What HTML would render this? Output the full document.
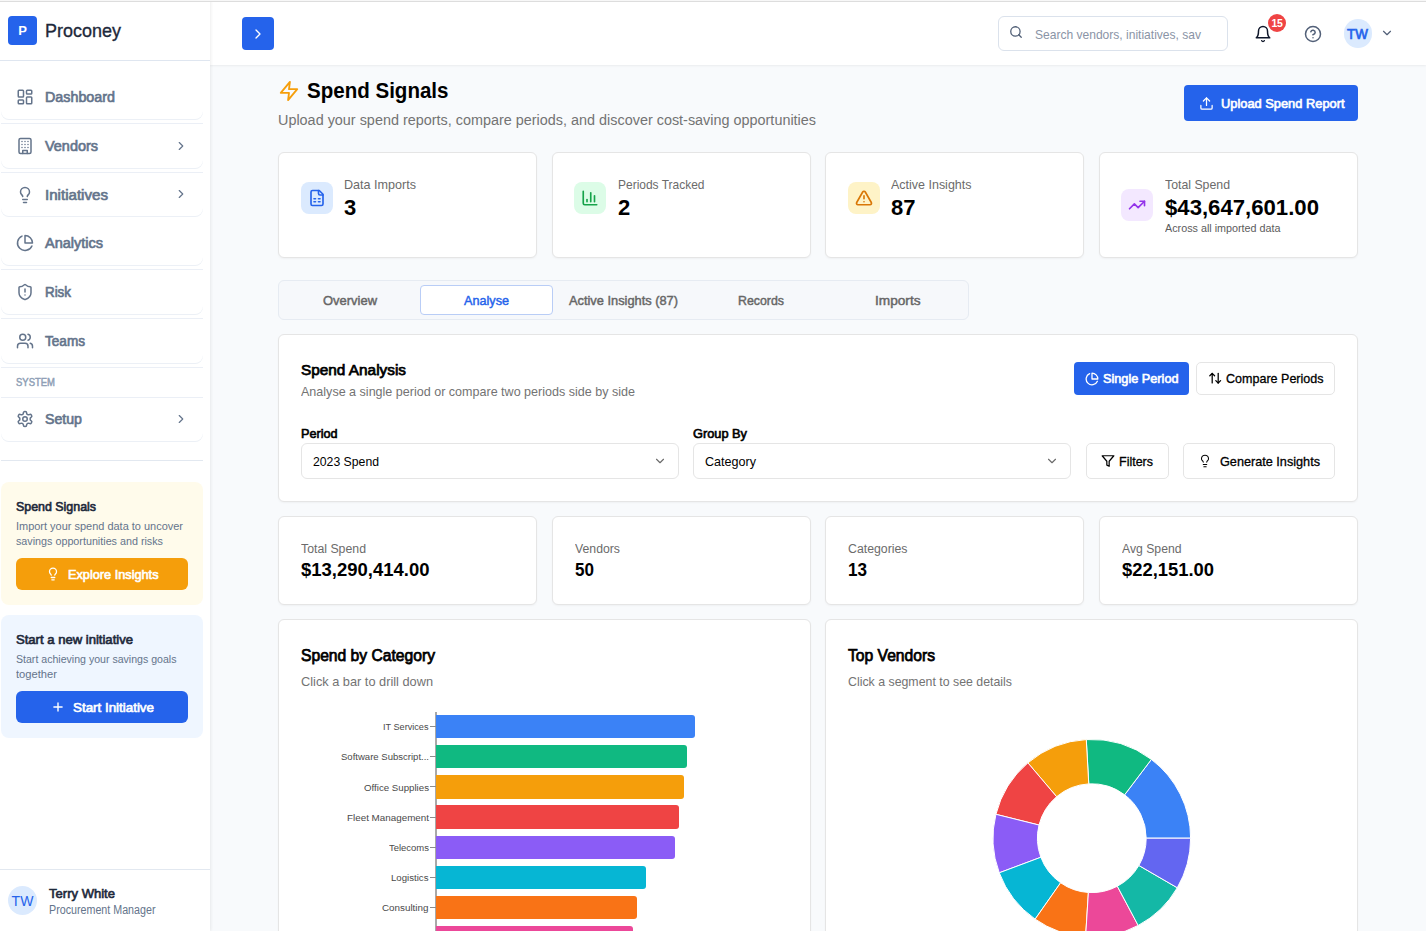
<!DOCTYPE html>
<html><head><meta charset="utf-8"><title>Proconey - Spend Signals</title>
<style>
*{box-sizing:border-box;margin:0;padding:0}
html,body{width:1426px;height:931px;overflow:hidden;background:#f8fafc;font-family:"Liberation Sans", sans-serif;}
.b{position:absolute}
.i{position:absolute;display:block}
.t{position:absolute;white-space:nowrap;font-family:"Liberation Sans", sans-serif;}
</style></head>
<body>
<header>
<div class="b" style="left:210px;top:0px;width:1216px;height:65px;background:#fff;box-shadow:0 1px 2px rgba(0,0,0,0.06);"></div>
<div class="b" style="left:242px;top:17px;width:32px;height:33px;background:#2563eb;border-radius:4px;"></div>
<svg class="i" style="left:250px;top:25.5px;" width="16" height="16" viewBox="0 0 24 24" fill="none" stroke="#fff" stroke-width="2" stroke-linecap="round" stroke-linejoin="round"><path d="m9 18 6-6-6-6"/></svg>
<div class="b" style="left:998px;top:16px;width:230px;height:35px;background:#fff;border:1px solid #dbe2ec;border-radius:6px;"></div>
<svg class="i" style="left:1009px;top:25.3px;" width="14" height="14" viewBox="0 0 24 24" fill="none" stroke="#4f5e75" stroke-width="2.2" stroke-linecap="round" stroke-linejoin="round"><circle cx="11" cy="11" r="8"/><path d="m21 21-4.300-4.300"/></svg>
<div class="t" style="top:24.50px;font-size:13px;line-height:19px;color:#8a94a6;transform:scaleX(0.9263);transform-origin:0 50%;left:1035px;">Search vendors, initiatives, sav</div>
<svg class="i" style="left:1254px;top:24.5px;" width="18" height="18" viewBox="0 0 24 24" fill="none" stroke="#0f172a" stroke-width="2" stroke-linecap="round" stroke-linejoin="round"><path d="M6 8a6 6 0 0 1 12 0c0 7 3 9 3 9H3s3-2 3-9"/><path d="M10.300 21a1.940 1.940 0 0 0 3.400 0"/></svg>
<div class="b" style="left:1268px;top:14px;width:18px;height:18px;background:#ef4444;border-radius:9px;"></div>
<div class="t" style="top:15.20px;font-size:10.5px;line-height:16px;color:#fff;font-weight:700;left:1277px;transform:translateX(-50%);letter-spacing:-0.3px;">15</div>
<svg class="i" style="left:1304px;top:25px;" width="18" height="18" viewBox="0 0 24 24" fill="none" stroke="#526078" stroke-width="2" stroke-linecap="round" stroke-linejoin="round"><circle cx="12" cy="12" r="10"/><path d="M9.090 9a3 3 0 0 1 5.830 1c0 2-3 3-3 3"/><path d="M12 17h.01"/></svg>
<div class="b" style="left:1343.5px;top:19px;width:28.5px;height:28.5px;background:#dbeafe;border-radius:15px;"></div>
<div class="t" style="top:23.70px;font-size:14px;line-height:20px;color:#2563eb;transform:scaleX(0.9556);transform-origin:0 50%;-webkit-text-stroke:0.7px #2563eb;left:1347.3px;">TW</div>
<svg class="i" style="left:1380.4px;top:26.3px;" width="14" height="14" viewBox="0 0 24 24" fill="none" stroke="#526078" stroke-width="2" stroke-linecap="round" stroke-linejoin="round"><path d="m6 9 6 6 6-6"/></svg>
</header>
<aside>
<div class="b" style="left:0px;top:0px;width:210px;height:931px;background:#fff;box-shadow:1px 0 3px rgba(0,0,0,0.07);"></div>
<div class="b" style="left:0px;top:60px;width:210px;height:1px;background:#dfe6f0;"></div>
<div class="b" style="left:8px;top:16px;width:29px;height:29px;background:#2563eb;border-radius:4px;"></div>
<div class="t" style="top:20.80px;font-size:13px;line-height:19px;color:#fff;font-weight:700;left:22.5px;transform:translateX(-50%);">P</div>
<div class="t" style="top:16.90px;font-size:19px;line-height:27px;color:#1e293b;transform:scaleX(0.9467);transform-origin:0 50%;-webkit-text-stroke:0.35px #1e293b;left:45px;">Proconey</div>
<div class="b" style="left:1px;top:75px;width:202px;height:43.5px;background:#fff;border-radius:0 0 8px 8px;box-shadow:0 1px 0 #ecf0f6;"></div>
<div class="b" style="left:1px;top:123px;width:202px;height:1px;background:#ebeff6;"></div>
<svg class="i" style="left:16px;top:88px;" width="18" height="18" viewBox="0 0 24 24" fill="none" stroke="#64748b" stroke-width="2" stroke-linecap="round" stroke-linejoin="round"><rect width="7" height="9" x="3" y="3" rx="1"/><rect width="7" height="5" x="14" y="3" rx="1"/><rect width="7" height="9" x="14" y="12" rx="1"/><rect width="7" height="5" x="3" y="16" rx="1"/></svg>
<div class="t" style="top:87.00px;font-size:14px;line-height:20px;color:#64748b;transform:scaleX(1.0219);transform-origin:0 50%;-webkit-text-stroke:0.65px #64748b;left:44.5px;">Dashboard</div>
<div class="b" style="left:1px;top:124px;width:202px;height:43.5px;background:#fff;border-radius:0 0 8px 8px;box-shadow:0 1px 0 #ecf0f6;"></div>
<div class="b" style="left:1px;top:172px;width:202px;height:1px;background:#ebeff6;"></div>
<svg class="i" style="left:16px;top:137px;" width="18" height="18" viewBox="0 0 24 24" fill="none" stroke="#64748b" stroke-width="2" stroke-linecap="round" stroke-linejoin="round"><rect width="16" height="20" x="4" y="2" rx="2" ry="2"/><path d="M9 22v-4h6v4"/><path d="M8 6h.01"/><path d="M16 6h.01"/><path d="M12 6h.01"/><path d="M12 10h.01"/><path d="M12 14h.01"/><path d="M16 10h.01"/><path d="M16 14h.01"/><path d="M8 10h.01"/><path d="M8 14h.01"/></svg>
<div class="t" style="top:136.00px;font-size:14px;line-height:20px;color:#64748b;transform:scaleX(1.0316);transform-origin:0 50%;-webkit-text-stroke:0.65px #64748b;left:44.5px;">Vendors</div>
<svg class="i" style="left:174px;top:138.5px;" width="14" height="14" viewBox="0 0 24 24" fill="none" stroke="#64748b" stroke-width="2" stroke-linecap="round" stroke-linejoin="round"><path d="m9 18 6-6-6-6"/></svg>
<div class="b" style="left:1px;top:172.5px;width:202px;height:43.5px;background:#fff;border-radius:0 0 8px 8px;box-shadow:0 1px 0 #ecf0f6;"></div>
<div class="b" style="left:1px;top:220.5px;width:202px;height:1px;background:#ebeff6;"></div>
<svg class="i" style="left:16px;top:185.5px;" width="18" height="18" viewBox="0 0 24 24" fill="none" stroke="#64748b" stroke-width="2" stroke-linecap="round" stroke-linejoin="round"><path d="M15 14c.2-1 .7-1.7 1.5-2.5 1-.9 1.5-2.2 1.5-3.5A6 6 0 0 0 6 8c0 1 .2 2.2 1.5 3.5.7.7 1.3 1.5 1.5 2.5"/><path d="M9 18h6"/><path d="M10 22h4"/></svg>
<div class="t" style="top:184.50px;font-size:14px;line-height:20px;color:#64748b;transform:scaleX(1.0795);transform-origin:0 50%;-webkit-text-stroke:0.65px #64748b;left:44.5px;">Initiatives</div>
<svg class="i" style="left:174px;top:187.0px;" width="14" height="14" viewBox="0 0 24 24" fill="none" stroke="#64748b" stroke-width="2" stroke-linecap="round" stroke-linejoin="round"><path d="m9 18 6-6-6-6"/></svg>
<div class="b" style="left:1px;top:221px;width:202px;height:43.5px;background:#fff;border-radius:0 0 8px 8px;box-shadow:0 1px 0 #ecf0f6;"></div>
<div class="b" style="left:1px;top:269px;width:202px;height:1px;background:#ebeff6;"></div>
<svg class="i" style="left:16px;top:234px;" width="18" height="18" viewBox="0 0 24 24" fill="none" stroke="#64748b" stroke-width="2" stroke-linecap="round" stroke-linejoin="round"><path d="M21.21 15.89A10 10 0 1 1 8 2.83"/><path d="M22 12A10 10 0 0 0 12 2v10z"/></svg>
<div class="t" style="top:233.00px;font-size:14px;line-height:20px;color:#64748b;transform:scaleX(1.0351);transform-origin:0 50%;-webkit-text-stroke:0.65px #64748b;left:44.5px;">Analytics</div>
<div class="b" style="left:1px;top:270px;width:202px;height:43.5px;background:#fff;border-radius:0 0 8px 8px;box-shadow:0 1px 0 #ecf0f6;"></div>
<div class="b" style="left:1px;top:318px;width:202px;height:1px;background:#ebeff6;"></div>
<svg class="i" style="left:16px;top:283px;" width="18" height="18" viewBox="0 0 24 24" fill="none" stroke="#64748b" stroke-width="2" stroke-linecap="round" stroke-linejoin="round"><path d="M20 13c0 5-3.5 7.5-7.66 8.95a1 1 0 0 1-.67-.01C7.5 20.5 4 18 4 13V6a1 1 0 0 1 1-1c2 0 4.500-1.2 6.240-2.720a1.170 1.170 0 0 1 1.520 0C14.510 3.810 17 5 19 5a1 1 0 0 1 1 1z"/><path d="M12 8v4"/><path d="M12 16h.01"/></svg>
<div class="t" style="top:282.00px;font-size:14px;line-height:20px;color:#64748b;transform:scaleX(0.9547);transform-origin:0 50%;-webkit-text-stroke:0.65px #64748b;left:44.5px;">Risk</div>
<div class="b" style="left:1px;top:319px;width:202px;height:43.5px;background:#fff;border-radius:0 0 8px 8px;box-shadow:0 1px 0 #ecf0f6;"></div>
<div class="b" style="left:1px;top:367px;width:202px;height:1px;background:#ebeff6;"></div>
<svg class="i" style="left:16px;top:332px;" width="18" height="18" viewBox="0 0 24 24" fill="none" stroke="#64748b" stroke-width="2" stroke-linecap="round" stroke-linejoin="round"><path d="M16 21v-2a4 4 0 0 0-4-4H6a4 4 0 0 0-4 4v2"/><circle cx="9" cy="7" r="4"/><path d="M22 21v-2a4 4 0 0 0-3-3.870"/><path d="M16 3.130a4 4 0 0 1 0 7.750"/></svg>
<div class="t" style="top:331.00px;font-size:14px;line-height:20px;color:#64748b;transform:scaleX(0.9701);transform-origin:0 50%;-webkit-text-stroke:0.65px #64748b;left:44.5px;">Teams</div>
<div class="b" style="left:1px;top:397px;width:202px;height:43.5px;background:#fff;border-radius:0 0 8px 8px;box-shadow:0 1px 0 #ecf0f6;"></div>
<svg class="i" style="left:16px;top:410px;" width="18" height="18" viewBox="0 0 24 24" fill="none" stroke="#64748b" stroke-width="2" stroke-linecap="round" stroke-linejoin="round"><path d="M12.220 2h-.440a2 2 0 0 0-2 2v.180a2 2 0 0 1-1 1.730l-.430.250a2 2 0 0 1-2 0l-.150-.080a2 2 0 0 0-2.730.730l-.220.380a2 2 0 0 0 .730 2.730l.150.100a2 2 0 0 1 1 1.720v.510a2 2 0 0 1-1 1.740l-.150.090a2 2 0 0 0-.730 2.730l.220.380a2 2 0 0 0 2.730.730l.150-.080a2 2 0 0 1 2 0l.430.250a2 2 0 0 1 1 1.730V20a2 2 0 0 0 2 2h.440a2 2 0 0 0 2-2v-.180a2 2 0 0 1 1-1.730l.430-.250a2 2 0 0 1 2 0l.150.080a2 2 0 0 0 2.730-.730l.220-.390a2 2 0 0 0-.730-2.730l-.150-.080a2 2 0 0 1-1-1.740v-.500a2 2 0 0 1 1-1.740l.150-.090a2 2 0 0 0 .730-2.730l-.220-.380a2 2 0 0 0-2.730-.730l-.150.080a2 2 0 0 1-2 0l-.430-.250a2 2 0 0 1-1-1.730V4a2 2 0 0 0-2-2z"/><circle cx="12" cy="12" r="3"/></svg>
<div class="t" style="top:409.00px;font-size:14px;line-height:20px;color:#64748b;transform:scaleX(1.0111);transform-origin:0 50%;-webkit-text-stroke:0.65px #64748b;left:44.5px;">Setup</div>
<svg class="i" style="left:174px;top:411.5px;" width="14" height="14" viewBox="0 0 24 24" fill="none" stroke="#64748b" stroke-width="2" stroke-linecap="round" stroke-linejoin="round"><path d="m9 18 6-6-6-6"/></svg>
<div class="b" style="left:1px;top:397px;width:202px;height:1px;background:#ebeff6;"></div>
<div class="t" style="top:374.00px;font-size:11px;line-height:16px;color:#8f9fb6;transform:scaleX(0.8622);transform-origin:0 50%;-webkit-text-stroke:0.5px #8f9fb6;left:15.5px;">SYSTEM</div>
<div class="b" style="left:1px;top:460px;width:202px;height:1px;background:#e2e8f0;"></div>
<div class="b" style="left:1px;top:482px;width:202px;height:122.5px;background:#fffbeb;border-radius:8px;"></div>
<div class="t" style="top:497.30px;font-size:13px;line-height:19px;color:#1e293b;transform:scaleX(0.9542);transform-origin:0 50%;-webkit-text-stroke:0.65px #1e293b;left:15.5px;">Spend Signals</div>
<div class="t" style="top:517.20px;font-size:11.7px;line-height:17px;color:#64748b;transform:scaleX(0.9381);transform-origin:0 50%;left:15.5px;">Import your spend data to uncover</div>
<div class="t" style="top:532.20px;font-size:11.7px;line-height:17px;color:#64748b;transform:scaleX(0.9197);transform-origin:0 50%;left:15.5px;">savings opportunities and risks</div>
<div class="b" style="left:16px;top:558px;width:172px;height:32px;background:#f59e0b;border-radius:6px;"></div>
<svg class="i" style="left:46.2px;top:567px;" width="14" height="14" viewBox="0 0 24 24" fill="none" stroke="#fff" stroke-width="2.2" stroke-linecap="round" stroke-linejoin="round"><path d="M15 14c.2-1 .7-1.7 1.5-2.5 1-.9 1.5-2.2 1.5-3.5A6 6 0 0 0 6 8c0 1 .2 2.2 1.5 3.5.7.7 1.3 1.5 1.5 2.5"/><path d="M9 18h6"/><path d="M10 22h4"/></svg>
<div class="t" style="top:565.30px;font-size:13px;line-height:19px;color:#fff;transform:scaleX(0.9784);transform-origin:0 50%;-webkit-text-stroke:0.65px #fff;left:68px;">Explore Insights</div>
<div class="b" style="left:1px;top:615px;width:202px;height:122.5px;background:#eff6ff;border-radius:8px;"></div>
<div class="t" style="top:630.30px;font-size:13px;line-height:19px;color:#1e293b;transform:scaleX(1.0056);transform-origin:0 50%;-webkit-text-stroke:0.65px #1e293b;left:15.5px;">Start a new initiative</div>
<div class="t" style="top:650.20px;font-size:11.7px;line-height:17px;color:#64748b;transform:scaleX(0.9049);transform-origin:0 50%;left:15.5px;">Start achieving your savings goals</div>
<div class="t" style="top:665.20px;font-size:11.7px;line-height:17px;color:#64748b;transform:scaleX(0.9559);transform-origin:0 50%;left:15.5px;">together</div>
<div class="b" style="left:16px;top:691px;width:172px;height:32px;background:#2563eb;border-radius:6px;"></div>
<svg class="i" style="left:51px;top:700px;" width="14" height="14" viewBox="0 0 24 24" fill="none" stroke="#fff" stroke-width="2.4" stroke-linecap="round" stroke-linejoin="round"><path d="M5 12h14"/><path d="M12 5v14"/></svg>
<div class="t" style="top:698.30px;font-size:13px;line-height:19px;color:#fff;transform:scaleX(1.0284);transform-origin:0 50%;-webkit-text-stroke:0.65px #fff;left:72.5px;">Start Initiative</div>
<div class="b" style="left:0px;top:869px;width:210px;height:1px;background:#e2e8f0;"></div>
<div class="b" style="left:8px;top:886px;width:29px;height:29px;background:#dbeafe;border-radius:15px;"></div>
<div class="t" style="top:891.00px;font-size:14px;line-height:20px;color:#2563eb;left:22.5px;transform:translateX(-50%);">TW</div>
<div class="t" style="top:884.00px;font-size:13.5px;line-height:20px;color:#1e293b;transform:scaleX(0.9668);transform-origin:0 50%;-webkit-text-stroke:0.65px #1e293b;left:48.5px;">Terry White</div>
<div class="t" style="top:900.50px;font-size:12px;line-height:18px;color:#64748b;transform:scaleX(0.8920);transform-origin:0 50%;left:48.5px;">Procurement Manager</div>
</aside>
<main>
<svg class="i" style="left:277.7px;top:80px;" width="22" height="22" viewBox="0 0 24 24" fill="none" stroke="#f59e0b" stroke-width="2" stroke-linecap="round" stroke-linejoin="round"><polygon points="13 2 3 14 12 14 11 22 21 10 12 10 13 2"/></svg>
<div class="t" style="top:75.40px;font-size:22px;line-height:31px;color:#000;font-weight:700;transform:scaleX(0.9334);transform-origin:0 50%;left:307px;">Spend Signals</div>
<div class="t" style="top:110.30px;font-size:14px;line-height:20px;color:#737373;transform:scaleX(1.0288);transform-origin:0 50%;left:278px;">Upload your spend reports, compare periods, and discover cost-saving opportunities</div>
<div class="b" style="left:1184px;top:85px;width:174px;height:36px;background:#2563eb;border-radius:4px;"></div>
<svg class="i" style="left:1198.5px;top:95.5px;" width="15" height="15" viewBox="0 0 24 24" fill="none" stroke="#fff" stroke-width="2" stroke-linecap="round" stroke-linejoin="round"><path d="M21 15v4a2 2 0 0 1-2 2H5a2 2 0 0 1-2-2v-4"/><polyline points="17 8 12 3 7 8"/><line x1="12" x2="12" y1="3" y2="15"/></svg>
<div class="t" style="top:94.30px;font-size:13px;line-height:19px;color:#fff;transform:scaleX(0.9878);transform-origin:0 50%;-webkit-text-stroke:0.65px #fff;left:1220.5px;">Upload Spend Report</div>
<div class="b" style="left:278px;top:152px;width:259px;height:106px;background:#fff;border:1px solid #e5e5e5;border-radius:6px;box-shadow:0 1px 2px rgba(0,0,0,0.04);"></div>
<div class="b" style="left:301px;top:182px;width:32px;height:32px;background:#dbeafe;border-radius:8px;"></div>
<svg class="i" style="left:308px;top:189px;" width="18" height="18" viewBox="0 0 24 24" fill="none" stroke="#2563eb" stroke-width="2.2" stroke-linecap="round" stroke-linejoin="round"><path d="M15 2H6a2 2 0 0 0-2 2v16a2 2 0 0 0 2 2h12a2 2 0 0 0 2-2V7Z"/><path d="M14 2v4a2 2 0 0 0 2 2h4"/><path d="M8 13h2"/><path d="M14 13h2"/><path d="M8 17h2"/><path d="M14 17h2"/></svg>
<div class="t" style="top:175.00px;font-size:13px;line-height:19px;color:#6b6b6b;transform:scaleX(0.9675);transform-origin:0 50%;left:344px;">Data Imports</div>
<div class="t" style="top:191.80px;font-size:22px;line-height:31px;color:#000;font-weight:700;left:344px;">3</div>
<div class="b" style="left:552px;top:152px;width:259px;height:106px;background:#fff;border:1px solid #e5e5e5;border-radius:6px;box-shadow:0 1px 2px rgba(0,0,0,0.04);"></div>
<div class="b" style="left:574.3px;top:182px;width:32px;height:32px;background:#dcfce7;border-radius:8px;"></div>
<svg class="i" style="left:581.3px;top:189px;" width="18" height="18" viewBox="0 0 24 24" fill="none" stroke="#16a34a" stroke-width="2.2" stroke-linecap="round" stroke-linejoin="round"><path d="M3 3v16a2 2 0 0 0 2 2h16"/><path d="M18 17V9"/><path d="M13 17V5"/><path d="M8 17v-3"/></svg>
<div class="t" style="top:175.00px;font-size:13px;line-height:19px;color:#6b6b6b;transform:scaleX(0.9208);transform-origin:0 50%;left:618px;">Periods Tracked</div>
<div class="t" style="top:191.80px;font-size:22px;line-height:31px;color:#000;font-weight:700;left:618px;">2</div>
<div class="b" style="left:825px;top:152px;width:259px;height:106px;background:#fff;border:1px solid #e5e5e5;border-radius:6px;box-shadow:0 1px 2px rgba(0,0,0,0.04);"></div>
<div class="b" style="left:848px;top:182px;width:32px;height:32px;background:#fef3c7;border-radius:8px;"></div>
<svg class="i" style="left:855px;top:189px;" width="18" height="18" viewBox="0 0 24 24" fill="none" stroke="#d97706" stroke-width="2.2" stroke-linecap="round" stroke-linejoin="round"><path d="m21.730 18-8-14a2 2 0 0 0-3.480 0l-8 14A2 2 0 0 0 4 21h16a2 2 0 0 0 1.730-3Z"/><path d="M12 9v4"/><path d="M12 17h.01"/></svg>
<div class="t" style="top:175.00px;font-size:13px;line-height:19px;color:#6b6b6b;transform:scaleX(0.9603);transform-origin:0 50%;left:891px;">Active Insights</div>
<div class="t" style="top:191.80px;font-size:22px;line-height:31px;color:#000;font-weight:700;left:891px;">87</div>
<div class="b" style="left:1099px;top:152px;width:259px;height:106px;background:#fff;border:1px solid #e5e5e5;border-radius:6px;box-shadow:0 1px 2px rgba(0,0,0,0.04);"></div>
<div class="b" style="left:1121px;top:189px;width:32px;height:32px;background:#f3e8ff;border-radius:8px;"></div>
<svg class="i" style="left:1128px;top:196px;" width="18" height="18" viewBox="0 0 24 24" fill="none" stroke="#9333ea" stroke-width="2.2" stroke-linecap="round" stroke-linejoin="round"><polyline points="22 7 13.5 15.5 8.5 10.5 2 17"/><polyline points="16 7 22 7 22 13"/></svg>
<div class="t" style="top:175.00px;font-size:13px;line-height:19px;color:#6b6b6b;transform:scaleX(0.9465);transform-origin:0 50%;left:1165px;">Total Spend</div>
<div class="t" style="top:191.80px;font-size:22px;line-height:31px;color:#000;font-weight:700;transform:scaleX(1.0069);transform-origin:0 50%;left:1164.5px;">$43,647,601.00</div>
<div class="t" style="top:219.60px;font-size:11px;line-height:16px;color:#5c5c5c;transform:scaleX(0.9788);transform-origin:0 50%;left:1164.5px;">Across all imported data</div>
<div class="b" style="left:278px;top:280px;width:691px;height:40px;background:#f6f8fb;border:1px solid #e6ebf2;border-radius:6px;"></div>
<div class="b" style="left:420px;top:285px;width:133px;height:30px;background:#fff;border:1px solid #b9cdf6;border-radius:4px;"></div>
<div class="t" style="top:291.00px;font-size:13px;line-height:19px;color:#666;transform:scaleX(0.9965);transform-origin:0 50%;-webkit-text-stroke:0.45px #666;left:322.5px;">Overview</div>
<div class="t" style="top:291.00px;font-size:13px;line-height:19px;color:#2563eb;transform:scaleX(0.9730);transform-origin:0 50%;-webkit-text-stroke:0.45px #2563eb;left:464.0px;">Analyse</div>
<div class="t" style="top:291.00px;font-size:13px;line-height:19px;color:#666;transform:scaleX(0.9860);transform-origin:0 50%;-webkit-text-stroke:0.45px #666;left:569.0px;">Active Insights (87)</div>
<div class="t" style="top:291.00px;font-size:13px;line-height:19px;color:#666;transform:scaleX(0.9500);transform-origin:0 50%;-webkit-text-stroke:0.45px #666;left:737.5px;">Records</div>
<div class="t" style="top:291.00px;font-size:13px;line-height:19px;color:#666;transform:scaleX(1.0497);transform-origin:0 50%;-webkit-text-stroke:0.45px #666;left:874.75px;">Imports</div>
<div class="b" style="left:278px;top:334px;width:1080px;height:168px;background:#fff;border:1px solid #e5e5e5;border-radius:6px;box-shadow:0 1px 2px rgba(0,0,0,0.04);"></div>
<div class="t" style="top:359.00px;font-size:15.5px;line-height:22px;color:#000;transform:scaleX(0.9906);transform-origin:0 50%;-webkit-text-stroke:0.75px #000;left:300.5px;">Spend Analysis</div>
<div class="t" style="top:382.00px;font-size:13px;line-height:19px;color:#737373;transform:scaleX(0.9649);transform-origin:0 50%;left:300.5px;">Analyse a single period or compare two periods side by side</div>
<div class="b" style="left:1074px;top:362px;width:115px;height:32.5px;background:#2563eb;border-radius:4px;"></div>
<svg class="i" style="left:1084.8px;top:371.6px;" width="14" height="14" viewBox="0 0 24 24" fill="none" stroke="#fff" stroke-width="2.2" stroke-linecap="round" stroke-linejoin="round"><path d="M21.21 15.89A10 10 0 1 1 8 2.83"/><path d="M22 12A10 10 0 0 0 12 2v10z"/></svg>
<div class="t" style="top:369.00px;font-size:13px;line-height:19px;color:#fff;transform:scaleX(0.9764);transform-origin:0 50%;-webkit-text-stroke:0.65px #fff;left:1103px;">Single Period</div>
<div class="b" style="left:1196px;top:362px;width:139px;height:32.5px;background:#fff;border:1px solid #e5e5e5;border-radius:5px;"></div>
<svg class="i" style="left:1207.8px;top:371.1px;" width="14.4" height="14.4" viewBox="0 0 24 24" fill="none" stroke="#000" stroke-width="2.1" stroke-linecap="round" stroke-linejoin="round"><path d="m21 16-4 4-4-4"/><path d="M17 20V4"/><path d="m3 8 4-4 4 4"/><path d="M7 4v16"/></svg>
<div class="t" style="top:369.00px;font-size:13px;line-height:19px;color:#000;transform:scaleX(0.9639);transform-origin:0 50%;-webkit-text-stroke:0.3px #000;left:1226px;">Compare Periods</div>
<div class="t" style="top:423.50px;font-size:13px;line-height:19px;color:#000;transform:scaleX(0.9713);transform-origin:0 50%;-webkit-text-stroke:0.65px #000;left:300.5px;">Period</div>
<div class="b" style="left:301px;top:443px;width:378px;height:36px;background:#fff;border:1px solid #e5e5e5;border-radius:6px;"></div>
<div class="t" style="top:452.00px;font-size:13px;line-height:19px;color:#000;transform:scaleX(0.9412);transform-origin:0 50%;left:312.5px;">2023 Spend</div>
<svg class="i" style="left:653px;top:454px;" width="14" height="14" viewBox="0 0 24 24" fill="none" stroke="#6a6a6a" stroke-width="1.9" stroke-linecap="round" stroke-linejoin="round"><path d="m6 9 6 6 6-6"/></svg>
<div class="t" style="top:423.50px;font-size:13px;line-height:19px;color:#000;transform:scaleX(0.9832);transform-origin:0 50%;-webkit-text-stroke:0.65px #000;left:693px;">Group By</div>
<div class="b" style="left:693px;top:443px;width:378px;height:36px;background:#fff;border:1px solid #e5e5e5;border-radius:6px;"></div>
<div class="t" style="top:452.00px;font-size:13px;line-height:19px;color:#000;transform:scaleX(0.9668);transform-origin:0 50%;left:705px;">Category</div>
<svg class="i" style="left:1045px;top:454px;" width="14" height="14" viewBox="0 0 24 24" fill="none" stroke="#6a6a6a" stroke-width="1.9" stroke-linecap="round" stroke-linejoin="round"><path d="m6 9 6 6 6-6"/></svg>
<div class="b" style="left:1086px;top:443px;width:83px;height:36px;background:#fff;border:1px solid #e5e5e5;border-radius:5px;"></div>
<svg class="i" style="left:1100.9px;top:454px;" width="14" height="14" viewBox="0 0 24 24" fill="none" stroke="#000" stroke-width="2.1" stroke-linecap="round" stroke-linejoin="round"><polygon points="22 3 2 3 10 12.460 10 19 14 21 14 12.460 22 3"/></svg>
<div class="t" style="top:452.00px;font-size:13px;line-height:19px;color:#000;transform:scaleX(0.9607);transform-origin:0 50%;-webkit-text-stroke:0.3px #000;left:1118.7px;">Filters</div>
<div class="b" style="left:1183px;top:443px;width:152px;height:36px;background:#fff;border:1px solid #e5e5e5;border-radius:5px;"></div>
<svg class="i" style="left:1198px;top:454px;" width="14" height="14" viewBox="0 0 24 24" fill="none" stroke="#000" stroke-width="1.8" stroke-linecap="round" stroke-linejoin="round"><path d="M15 14c.2-1 .7-1.7 1.5-2.5 1-.9 1.5-2.2 1.5-3.5A6 6 0 0 0 6 8c0 1 .2 2.2 1.5 3.5.7.7 1.3 1.5 1.5 2.5"/><path d="M9 18h6"/><path d="M10 22h4"/></svg>
<div class="t" style="top:452.00px;font-size:13px;line-height:19px;color:#000;transform:scaleX(0.9744);transform-origin:0 50%;-webkit-text-stroke:0.3px #000;left:1220px;">Generate Insights</div>
<div class="b" style="left:278px;top:516px;width:259px;height:89px;background:#fff;border:1px solid #e5e5e5;border-radius:6px;box-shadow:0 1px 2px rgba(0,0,0,0.04);"></div>
<div class="t" style="top:539.50px;font-size:12.5px;line-height:18px;color:#6b6b6b;transform:scaleX(0.9844);transform-origin:0 50%;left:300.5px;">Total Spend</div>
<div class="t" style="top:557.50px;font-size:17.6px;line-height:25px;color:#000;font-weight:700;transform:scaleX(1.0506);transform-origin:0 50%;left:300.5px;">$13,290,414.00</div>
<div class="b" style="left:552px;top:516px;width:259px;height:89px;background:#fff;border:1px solid #e5e5e5;border-radius:6px;box-shadow:0 1px 2px rgba(0,0,0,0.04);"></div>
<div class="t" style="top:539.50px;font-size:12.5px;line-height:18px;color:#6b6b6b;transform:scaleX(0.9809);transform-origin:0 50%;left:574.5px;">Vendors</div>
<div class="t" style="top:557.50px;font-size:17.6px;line-height:25px;color:#000;font-weight:700;transform:scaleX(0.9705);transform-origin:0 50%;left:574.5px;">50</div>
<div class="b" style="left:825px;top:516px;width:259px;height:89px;background:#fff;border:1px solid #e5e5e5;border-radius:6px;box-shadow:0 1px 2px rgba(0,0,0,0.04);"></div>
<div class="t" style="top:539.50px;font-size:12.5px;line-height:18px;color:#6b6b6b;transform:scaleX(0.9842);transform-origin:0 50%;left:847.5px;">Categories</div>
<div class="t" style="top:557.50px;font-size:17.6px;line-height:25px;color:#000;font-weight:700;transform:scaleX(0.9705);transform-origin:0 50%;left:847.5px;">13</div>
<div class="b" style="left:1099px;top:516px;width:259px;height:89px;background:#fff;border:1px solid #e5e5e5;border-radius:6px;box-shadow:0 1px 2px rgba(0,0,0,0.04);"></div>
<div class="t" style="top:539.50px;font-size:12.5px;line-height:18px;color:#6b6b6b;transform:scaleX(0.9764);transform-origin:0 50%;left:1121.5px;">Avg Spend</div>
<div class="t" style="top:557.50px;font-size:17.6px;line-height:25px;color:#000;font-weight:700;transform:scaleX(1.0447);transform-origin:0 50%;left:1121.5px;">$22,151.00</div>
<div class="b" style="left:278px;top:619px;width:533px;height:330px;background:#fff;border:1px solid #e5e5e5;border-radius:6px;box-shadow:0 1px 2px rgba(0,0,0,0.04);"></div>
<div class="t" style="top:643.80px;font-size:16px;line-height:23px;color:#000;transform:scaleX(0.9782);transform-origin:0 50%;-webkit-text-stroke:0.75px #000;left:300.5px;">Spend by Category</div>
<div class="t" style="top:672.00px;font-size:13px;line-height:19px;color:#737373;transform:scaleX(0.9822);transform-origin:0 50%;left:300.5px;">Click a bar to drill down</div>
<div class="b" style="left:435px;top:712px;width:2px;height:230px;background:#a9a9a9;"></div>
<div class="b" style="left:436px;top:714.9px;width:258.5px;height:23.4px;background:#3b82f6;border-radius:0 3px 3px 0;"></div>
<div class="b" style="left:430px;top:726.1px;width:5.5px;height:1px;background:#8c8c8c;"></div>
<div class="t" style="top:720.30px;font-size:9.6px;line-height:14px;color:#4a4a4a;transform:scaleX(0.9516);transform-origin:0 50%;left:383.1px;">IT Services</div>
<div class="b" style="left:436px;top:745.05px;width:251px;height:23.4px;background:#10b981;border-radius:0 3px 3px 0;"></div>
<div class="b" style="left:430px;top:756.25px;width:5.5px;height:1px;background:#8c8c8c;"></div>
<div class="t" style="top:750.45px;font-size:9.6px;line-height:14px;color:#4a4a4a;transform:scaleX(0.9942);transform-origin:0 50%;left:340.6px;">Software Subscript...</div>
<div class="b" style="left:436px;top:775.2px;width:248px;height:23.4px;background:#f59e0b;border-radius:0 3px 3px 0;"></div>
<div class="b" style="left:430px;top:786.4px;width:5.5px;height:1px;background:#8c8c8c;"></div>
<div class="t" style="top:780.60px;font-size:9.6px;line-height:14px;color:#4a4a4a;transform:scaleX(1.0100);transform-origin:0 50%;left:363.6px;">Office Supplies</div>
<div class="b" style="left:436px;top:805.35px;width:243.29999999999995px;height:23.4px;background:#ef4444;border-radius:0 3px 3px 0;"></div>
<div class="b" style="left:430px;top:816.55px;width:5.5px;height:1px;background:#8c8c8c;"></div>
<div class="t" style="top:810.75px;font-size:9.6px;line-height:14px;color:#4a4a4a;transform:scaleX(1.0250);transform-origin:0 50%;left:346.6px;">Fleet Management</div>
<div class="b" style="left:436px;top:835.5px;width:239px;height:23.4px;background:#8b5cf6;border-radius:0 3px 3px 0;"></div>
<div class="b" style="left:430px;top:846.7px;width:5.5px;height:1px;background:#8c8c8c;"></div>
<div class="t" style="top:840.90px;font-size:9.6px;line-height:14px;color:#4a4a4a;transform:scaleX(0.9869);transform-origin:0 50%;left:388.6px;">Telecoms</div>
<div class="b" style="left:436px;top:865.65px;width:210.29999999999995px;height:23.4px;background:#06b6d4;border-radius:0 3px 3px 0;"></div>
<div class="b" style="left:430px;top:876.85px;width:5.5px;height:1px;background:#8c8c8c;"></div>
<div class="t" style="top:871.05px;font-size:9.6px;line-height:14px;color:#4a4a4a;transform:scaleX(1.0046);transform-origin:0 50%;left:391.1px;">Logistics</div>
<div class="b" style="left:436px;top:895.8px;width:201px;height:23.4px;background:#f97316;border-radius:0 3px 3px 0;"></div>
<div class="b" style="left:430px;top:907.0px;width:5.5px;height:1px;background:#8c8c8c;"></div>
<div class="t" style="top:901.20px;font-size:9.6px;line-height:14px;color:#4a4a4a;transform:scaleX(1.0255);transform-origin:0 50%;left:382.1px;">Consulting</div>
<div class="b" style="left:436px;top:925.95px;width:197px;height:23.4px;background:#ec4899;border-radius:0 3px 3px 0;"></div>
<div class="b" style="left:430px;top:937.15px;width:5.5px;height:1px;background:#8c8c8c;"></div>
<div class="t" style="top:931.35px;font-size:9.6px;line-height:14px;color:#4a4a4a;transform:scaleX(1.0682);transform-origin:0 50%;left:383.6px;">Marketing</div>
<div class="b" style="left:825px;top:619px;width:533px;height:330px;background:#fff;border:1px solid #e5e5e5;border-radius:6px;box-shadow:0 1px 2px rgba(0,0,0,0.04);"></div>
<div class="t" style="top:643.80px;font-size:16px;line-height:23px;color:#000;transform:scaleX(0.9780);transform-origin:0 50%;-webkit-text-stroke:0.75px #000;left:848px;">Top Vendors</div>
<div class="t" style="top:672.00px;font-size:13px;line-height:19px;color:#737373;transform:scaleX(0.9496);transform-origin:0 50%;left:848px;">Click a segment to see details</div>
<svg class="i" style="left:0;top:0" width="1426" height="931" viewBox="0 0 1426 931"><path d="M1190.60 838.20 A98.8 98.8 0 0 0 1151.40 759.40 L1124.61 794.81 A54.4 54.4 0 0 1 1146.20 838.20 Z" fill="#3b82f6" stroke="#fff" stroke-width="1"/><path d="M1151.40 759.40 A98.8 98.8 0 0 0 1086.28 739.55 L1088.76 783.88 A54.4 54.4 0 0 1 1124.61 794.81 Z" fill="#10b981" stroke="#fff" stroke-width="1"/><path d="M1086.28 739.55 A98.8 98.8 0 0 0 1027.90 762.85 L1056.61 796.71 A54.4 54.4 0 0 1 1088.76 783.88 Z" fill="#f59e0b" stroke="#fff" stroke-width="1"/><path d="M1027.90 762.85 A98.8 98.8 0 0 0 995.93 814.30 L1039.02 825.04 A54.4 54.4 0 0 1 1056.61 796.71 Z" fill="#ef4444" stroke="#fff" stroke-width="1"/><path d="M995.93 814.30 A98.8 98.8 0 0 0 999.26 872.80 L1040.85 857.25 A54.4 54.4 0 0 1 1039.02 825.04 Z" fill="#8b5cf6" stroke="#fff" stroke-width="1"/><path d="M999.26 872.80 A98.8 98.8 0 0 0 1035.13 919.13 L1060.60 882.76 A54.4 54.4 0 0 1 1040.85 857.25 Z" fill="#06b6d4" stroke="#fff" stroke-width="1"/><path d="M1035.13 919.13 A98.8 98.8 0 0 0 1085.60 936.81 L1088.38 892.49 A54.4 54.4 0 0 1 1060.60 882.76 Z" fill="#f97316" stroke="#fff" stroke-width="1"/><path d="M1085.60 936.81 A98.8 98.8 0 0 0 1138.18 925.44 L1117.34 886.23 A54.4 54.4 0 0 1 1088.38 892.49 Z" fill="#ec4899" stroke="#fff" stroke-width="1"/><path d="M1138.18 925.44 A98.8 98.8 0 0 0 1177.28 887.75 L1138.86 865.48 A54.4 54.4 0 0 1 1117.34 886.23 Z" fill="#14b8a6" stroke="#fff" stroke-width="1"/><path d="M1177.28 887.75 A98.8 98.8 0 0 0 1190.60 838.20 L1146.20 838.20 A54.4 54.4 0 0 1 1138.86 865.48 Z" fill="#6366f1" stroke="#fff" stroke-width="1"/></svg>
</main>
<div class="b" style="left:0px;top:0px;width:1426px;height:1px;background:#f7f7f7;"></div>
<div class="b" style="left:0px;top:1px;width:1426px;height:1px;background:#dddddd;"></div>
</body></html>
